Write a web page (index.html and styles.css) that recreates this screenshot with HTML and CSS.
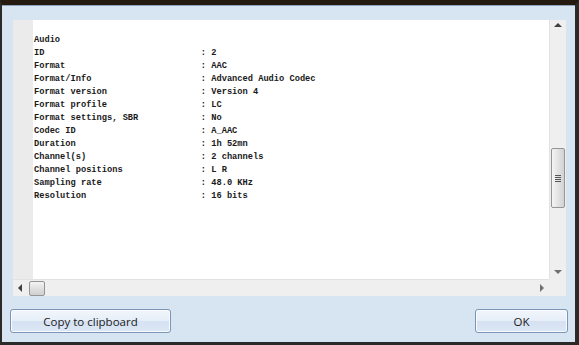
FILE: index.html
```html
<!DOCTYPE html>
<html lang="en">
<head>
  <meta charset="UTF-8">
  <title>MediaInfo - Audio</title>
  <link rel="stylesheet" href="styles.css">
</head>
<body>
  <div class="window">
    <div class="panel">
      <div class="view">
        <div class="gutter"></div>
        <pre class="report">Audio
ID                              : 2
Format                          : AAC
Format/Info                     : Advanced Audio Codec
Format version                  : Version 4
Format profile                  : LC
Format settings, SBR            : No
Codec ID                        : A_AAC
Duration                        : 1h 52mn
Channel(s)                      : 2 channels
Channel positions               : L R
Sampling rate                   : 48.0 KHz
Resolution                      : 16 bits</pre>
      </div>
      <div class="vscroll">
        <span class="arrow up"></span>
        <div class="track">
          <div class="vthumb"><span class="grip"></span></div>
        </div>
        <span class="arrow down"></span>
      </div>
      <div class="hscroll">
        <span class="arrow left"></span>
        <div class="htrack">
          <div class="hthumb"></div>
        </div>
        <span class="arrow right"></span>
      </div>
      <div class="corner"></div>
    </div>

    <div class="buttons">
      <button class="btn btn-copy">Copy to clipboard</button>
      <button class="btn btn-ok">OK</button>
    </div>
  </div>
</body>
</html>
```

FILE: styles.css
```css
html, body {
  margin: 0;
  height: 100%;
}

body {
  background: #241a10;
}

.window {
  box-sizing: border-box;
  height: 345px;
  width: 579px;
  background: #d7e4f2;
  border-top: 5px solid #241a10;
  border-left: 2px solid #2c2a28;
  border-right: 4px solid #2c2a28;
  border-bottom: 3px solid #2c2a28;
  box-shadow: inset 0 1px 0 #8fa2bc;
  padding: 15px 9px 0 11px;
  display: flex;
  flex-direction: column;
}

.panel {
  display: grid;
  grid-template-columns: 536px 17px;
  grid-template-rows: 259px 17px;
}

.view {
  display: flex;
  background: #ffffff;
}

.gutter {
  width: 20px;
  background: #ebebeb;
}

.report {
  margin: 0;
  padding: 14px 0 0 1px;
  font-family: "Liberation Mono", "Courier New", monospace;
  font-size: 8.7px;
  font-weight: bold;
  line-height: 13px;
  color: #1a1a1a;
  white-space: pre;
}

.vscroll {
  display: flex;
  flex-direction: column;
  align-items: center;
  background: #efefef;
  border-left: 1px solid #e2e2e2;
}

.track {
  flex: 1;
  width: 100%;
  display: flex;
  flex-direction: column;
  align-items: center;
}

.vthumb {
  margin-top: 115px;
  width: 12px;
  height: 58px;
  border: 1px solid #959595;
  border-radius: 2px;
  background: linear-gradient(to right, #f4f4f4, #e3e3e3 50%, #d2d2d2);
  display: flex;
  align-items: center;
  justify-content: center;
}

.grip {
  width: 6px;
  height: 7px;
  background: repeating-linear-gradient(to bottom, #555555 0 1px, transparent 1px 2px);
}

.hscroll {
  display: flex;
  align-items: center;
  background: #efefef;
  border-top: 1px solid #e2e2e2;
}

.htrack {
  flex: 1;
  height: 100%;
  display: flex;
  align-items: center;
}

.hthumb {
  margin-left: 2px;
  width: 14px;
  height: 13px;
  border: 1px solid #959595;
  border-radius: 2px;
  background: linear-gradient(to bottom, #f4f4f4, #e0e0e0 50%, #cfcfcf);
}

.corner {
  background: #efefef;
}

.arrow {
  width: 0;
  height: 0;
  border: 4px solid transparent;
}

.arrow.up {
  margin: 3px 0 6px;
  border-top: 0;
  border-bottom: 4px solid #404040;
}

.arrow.down {
  margin: 6px 0 5px;
  border-bottom: 0;
  border-top: 4px solid #707070;
}

.arrow.left {
  margin: 0 5px 0 5px;
  border-left: 0;
  border-right: 4px solid #404040;
}

.arrow.right {
  margin: 0 5px 0 6px;
  border-right: 0;
  border-left: 4px solid #707070;
}

.buttons {
  display: flex;
  justify-content: space-between;
  margin-top: 13px;
  margin-left: -2px;
  margin-right: -2px;
}

.btn {
  height: 24px;
  border: 1px solid #7d95b5;
  border-radius: 3px;
  background: linear-gradient(to bottom, #f2f6fb, #e6eef8 50%, #d6e2f2 51%, #dce7f5);
  box-shadow: inset 0 0 0 1px #f8fbff;
  font-family: "Open Sans", "Liberation Sans", sans-serif;
  font-size: 11.5px;
  color: #1a1a1a;
  padding: 0;
}

.btn-copy {
  width: 161px;
  margin-left: -1px;
}

.btn-ok {
  width: 93px;
}
```
